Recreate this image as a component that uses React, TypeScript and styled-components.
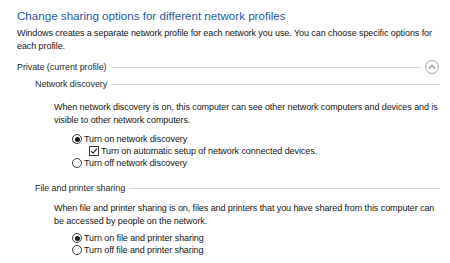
import styled, { createGlobalStyle } from 'styled-components'

const GlobalStyle = createGlobalStyle`
  html, body {
    margin: 0;
    padding: 0;
    background: #ffffff;
  }
  body {
    font-family: "Liberation Sans", Arial, sans-serif;
    font-size: 9px;
    letter-spacing: -0.08px;
    color: #151515;
  }
`

const Page = styled.div`
  width: 450px;
  height: 263px;
  overflow: hidden;
  padding: 0 10px 0 17px;
  box-sizing: border-box;
`

const Title = styled.h1`
  margin: 6px 0 1px;
  font-size: 11.6px;
  line-height: 20px;
  font-weight: 400;
  letter-spacing: 0;
  color: #1f5aa6;
`

const Text = styled.p<{ $indent?: number; $top?: number }>`
  margin: ${(p) => p.$top ?? 0}px 0 0 ${(p) => p.$indent ?? 0}px;
  line-height: 13px;
  font-size: 9px;
`

const Header = styled.div<{ $indent: number; $top: number; $h: number }>`
  display: flex;
  align-items: center;
  gap: 4px;
  height: ${(p) => p.$h}px;
  margin: ${(p) => p.$top}px 0 0 ${(p) => p.$indent}px;
  color: #2b2b2b;
`

const Rule = styled.div`
  flex: 1;
  height: 1px;
  background: #d9d9d9;
`

const Collapse = styled.button`
  width: 14px;
  height: 14px;
  padding: 0;
  border: 1px solid #a8a8a8;
  border-radius: 50%;
  background: #fff;
  display: flex;
  align-items: center;
  justify-content: center;
  margin-right: 1px;
`

const Options = styled.div<{ $top: number }>`
  display: flex;
  flex-direction: column;
  margin: ${(p) => p.$top}px 0 0 55px;
`

const Option = styled.label<{ $indent?: number }>`
  display: flex;
  align-items: center;
  gap: 2px;
  height: 12px;
  margin-left: ${(p) => p.$indent ?? 0}px;
`

const Radio = styled.span<{ $on?: boolean }>`
  width: 10px;
  height: 10px;
  border: 1px solid #3a3a3a;
  border-radius: 50%;
  box-sizing: border-box;
  display: flex;
  align-items: center;
  justify-content: center;
  &::after {
    content: '';
    width: 5px;
    height: 5px;
    border-radius: 50%;
    background: ${(p) => (p.$on ? '#1a1a1a' : 'transparent')};
  }
`

const Check = styled.span`
  width: 10px;
  height: 10px;
  border: 1px solid #3a3a3a;
  box-sizing: border-box;
  display: flex;
  align-items: center;
  justify-content: center;
`

const Chevron = () => (
  <svg width="8" height="6" viewBox="0 0 8 6">
    <path d="M1 4.5 L4 1.5 L7 4.5" fill="none" stroke="#8a8a8a" strokeWidth="1.1" />
  </svg>
)

const Tick = () => (
  <svg width="8" height="8" viewBox="0 0 8 8">
    <path d="M1 4.2 L3.1 6.2 L7 1.6" fill="none" stroke="#222" strokeWidth="1.1" />
  </svg>
)

export default function App() {
  return (
    <Page>
      <GlobalStyle />
      <Title>Change sharing options for different network profiles</Title>
      <Text>
        Windows creates a separate network profile for each network you use. You can choose specific options for
        each profile.
      </Text>

      <Header $indent={0} $top={6} $h={16}>
        <span>Private (current profile)</span>
        <Rule />
        <Collapse aria-label="collapse">
          <Chevron />
        </Collapse>
      </Header>

      <Header $indent={18} $top={2} $h={14}>
        <span>Network discovery</span>
        <Rule />
      </Header>
      <Text $indent={37} $top={10}>
        When network discovery is on, this computer can see other network computers and devices and is
        visible to other network computers.
      </Text>
      <Options $top={6}>
        <Option>
          <Radio $on />
          Turn on network discovery
        </Option>
        <Option $indent={17}>
          <Check>
            <Tick />
          </Check>
          Turn on automatic setup of network connected devices.
        </Option>
        <Option>
          <Radio />
          Turn off network discovery
        </Option>
      </Options>

      <Header $indent={18} $top={12} $h={14}>
        <span>File and printer sharing</span>
        <Rule />
      </Header>
      <Text $indent={37} $top={7}>
        When file and printer sharing is on, files and printers that you have shared from this computer can
        be accessed by people on the network.
      </Text>
      <Options $top={4}>
        <Option>
          <Radio $on />
          Turn on file and printer sharing
        </Option>
        <Option>
          <Radio />
          Turn off file and printer sharing
        </Option>
      </Options>
    </Page>
  )
}
